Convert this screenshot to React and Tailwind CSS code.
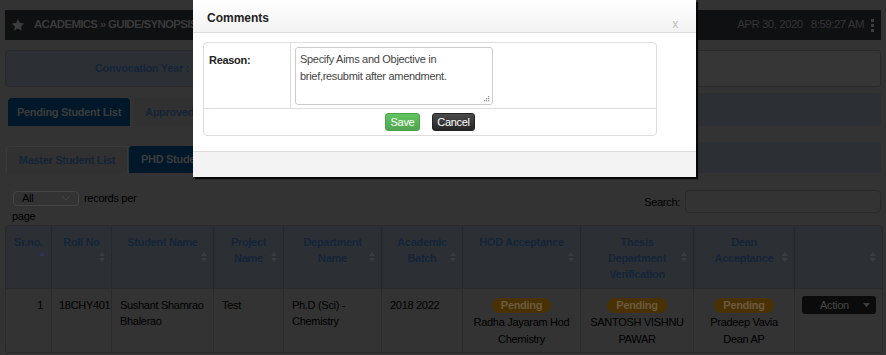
import React from 'react';

const cols = [
  { title: ['Sr.no.'], w: 45, sort: 'asc' },
  { title: ['Roll No'], w: 60 },
  { title: ['Student Name'], w: 102 },
  { title: ['Project', 'Name'], w: 70 },
  { title: ['Department', 'Name'], w: 98 },
  { title: ['Academic', 'Batch'], w: 81 },
  { title: ['HOD Acceptance'], w: 118 },
  { title: ['Thesis', 'Department', 'Verification'], w: 113 },
  { title: ['Dean', 'Acceptance'], w: 101 },
  { title: [], w: 88 },
];

const SortIcon = ({ asc }) => (
  <svg className="absolute right-[6px] top-1/2 -translate-y-1/2" width="6" height="12" viewBox="0 0 6 12">
    {asc ? (
      <path d="M0 5 L3 1 L6 5 Z" fill="#2b3561" />
    ) : (
      <>
        <path d="M0 5 L3 1 L6 5 Z" fill="#3a3e44" />
        <path d="M0 7 L3 11 L6 7 Z" fill="#3a3e44" />
      </>
    )}
  </svg>
);

const Pending = () => (
  <span className="inline-block rounded-full bg-[#4a3104] px-[9px] leading-[15px] font-bold text-[#6a5a40]">Pending</span>
);

const cell = 'border-l border-t border-[#2a2a2a] pt-[8px]';

export default function App() {
  return (
    <div className="relative w-[886px] h-[355px] overflow-hidden bg-[#333333] font-['Liberation_Sans',Arial,sans-serif] text-[11px] tracking-[-0.3px] text-black">
      <div className="px-[5px] pt-[10px]">
        {/* Top bar */}
        <div className="flex h-[30px] items-center bg-[#0f1012] pl-[6px] pr-[7px]">
          <svg width="14" height="14" viewBox="0 0 24 24" className="mr-[9px]">
            <path d="M12 1.5l3.2 7 7.6.8-5.7 5.1 1.6 7.5L12 18l-6.7 3.9 1.6-7.5L1.2 9.3l7.6-.8z" fill="#3d3d3d" />
          </svg>
          <span className="whitespace-nowrap text-[11.5px] font-bold tracking-[-0.7px] text-[#3a3a3a]">
            ACADEMICS » GUIDE/SYNOPSIS
          </span>
          <span className="ml-auto whitespace-nowrap text-[11.5px] tracking-[-0.5px] text-[#353535]">
            APR 30, 2020&nbsp;&nbsp;&nbsp;8:59:27 AM
          </span>
          <div className="ml-[7px] flex flex-col gap-[2px]">
            <span className="h-[3px] w-[3px] bg-[#3d3d3d]" />
            <span className="h-[3px] w-[3px] bg-[#3d3d3d]" />
            <span className="h-[3px] w-[3px] bg-[#3d3d3d]" />
          </div>
        </div>

        {/* Convocation */}
        <div className="mt-[10px] flex h-[37px] overflow-hidden rounded-[3px] border border-[#2a2a2a]">
          <div className="flex w-[190px] items-center justify-end bg-[#2c3035] pr-[7px] font-bold text-[#142438]">
            Convocation Year :
          </div>
          <div className="flex-1 bg-[#363636]" />
        </div>

        {/* Tabs 1 */}
        <div className="mt-[6px] flex h-[33px] items-end">
          <div className="ml-[3px] flex h-[28px] w-[122px] items-center justify-center rounded-t-[4px] bg-[#01182a] font-bold text-[#3c3c3c]">
            Pending Student List
          </div>
          <div className="ml-[3px] flex h-[28px] items-center whitespace-nowrap rounded-t-[4px] bg-[#313131] px-[12px] font-bold text-[#142438]">
            Approved Student List
          </div>
          <div className="h-[33px] flex-1 rounded-r-[3px] bg-[#2c3035]" />
        </div>

        {/* Tabs 2 */}
        <div className="mt-[16px] flex h-[31px] items-end">
          <div className="ml-[1px] flex h-[27px] w-[122px] items-center justify-center rounded-tl-[4px] border border-b-0 border-[#3a3a3a] bg-[#313131] font-bold text-[#142438]">
            Master Student List
          </div>
          <div className="ml-[1px] flex h-[27px] items-center whitespace-nowrap rounded-t-[4px] bg-[#01182a] px-[12px] font-bold text-[#3c3c3c]">
            PHD Student List
          </div>
          <div className="h-[31px] flex-1 rounded-r-[3px] bg-[#2c3035]" />
        </div>

        {/* Records / search */}
        <div className="mt-[17px] flex h-[35px] items-start">
          <div className="pl-[8px]">
            <div className="flex items-center">
              <div className="flex h-[15px] w-[66px] items-center justify-between rounded-[4px] border border-[#444] px-[8px]">
                <span>All</span>
                <svg width="8" height="5" viewBox="0 0 8 5">
                  <path d="M0.5 0.5 L4 4 L7.5 0.5" fill="none" stroke="#444" strokeWidth="1" />
                </svg>
              </div>
              <span className="ml-[5px]">records per</span>
            </div>
            <div className="-ml-[1px] mt-[1px]">page</div>
          </div>
          <div className="ml-auto flex items-center">
            <span className="mr-[5px] mt-[1px]">Search:</span>
            <div className="h-[23px] w-[196px] rounded-[4px] border border-[#2a2a2a] bg-[#333]" />
          </div>
        </div>

        {/* Table */}
        <table className="w-[876px] table-fixed border-separate border-spacing-0 overflow-hidden rounded-[3px] border border-[#2a2a2a]">
          <colgroup>
            {cols.map((c, i) => (
              <col key={i} style={{ width: c.w }} />
            ))}
          </colgroup>
          <thead>
            <tr className="h-[62px] bg-[#2c3035]">
              {cols.map((c, i) => (
                <th
                  key={i}
                  className={`relative pt-[8px] align-top text-center font-bold leading-[16px] text-[#142438] ${i ? 'border-l border-[#262a2e] px-[8px]' : 'px-[4px]'}`}
                >
                  {c.title.map((t, j) => (
                    <div key={j} className="whitespace-nowrap">{t}</div>
                  ))}
                  <SortIcon asc={c.sort === 'asc'} />
                </th>
              ))}
            </tr>
          </thead>
          <tbody>
            <tr className="h-[64px] bg-[#333333] align-top leading-[16px]">
              <td className="border-t border-[#2a2a2a] pr-[8px] pt-[8px] text-right">1</td>
              <td className={`${cell} pl-[7px]`}>18CHY401</td>
              <td className={`${cell} pl-[8px]`}>
                <div>Sushant Shamrao</div>
                <div>Bhalerao</div>
              </td>
              <td className={`${cell} pl-[8px]`}>Test</td>
              <td className={`${cell} pl-[8px]`}>
                <div>Ph.D (Sci) -</div>
                <div>Chemistry</div>
              </td>
              <td className={`${cell} pl-[8px]`}>2018 2022</td>
              <td className={`${cell} text-center leading-[17px]`}>
                <Pending />
                <div>Radha Jayaram Hod</div>
                <div>Chemistry</div>
              </td>
              <td className={`${cell} text-center leading-[17px]`}>
                <Pending />
                <div>SANTOSH VISHNU</div>
                <div>PAWAR</div>
              </td>
              <td className={`${cell} text-center leading-[17px]`}>
                <Pending />
                <div>Pradeep Vavia</div>
                <div>Dean AP</div>
              </td>
              <td className="border-l border-t border-[#2a2a2a] pl-[7px] pt-[7px]">
                <div className="flex h-[18px] w-[74px] items-center rounded-[3px] bg-[#0b0b0b] pl-[18px] pr-[6px] text-[#484848]">
                  <span>Action</span>
                  <svg className="ml-auto" width="7" height="4" viewBox="0 0 7 4">
                    <path d="M0 0 L7 0 L3.5 4 Z" fill="#404040" />
                  </svg>
                </div>
              </td>
            </tr>
          </tbody>
        </table>
      </div>

      {/* Modal */}
      <div className="absolute left-[193px] top-0 w-[503px] bg-white shadow-[2px_2px_1px_rgba(0,0,0,0.85)]">
        <div className="relative h-[33px] border-b border-[#dcdcdc] bg-gradient-to-b from-white to-[#f3f3f3] pl-[14px] pt-[9px]">
          <span className="text-[12px] font-bold tracking-normal text-[#222]">Comments</span>
          <span className="absolute right-[18px] top-[18px] text-[12px] leading-[12px] text-[#bbb]">x</span>
        </div>
        <div className="pb-[15px] pl-[10px] pr-[39px] pt-[9px]">
          <div className="rounded-[4px] border border-[#dddddd]">
            <div className="flex h-[66px] border-b border-[#dddddd]">
              <div className="w-[87px] border-r border-[#dddddd] pl-[5px] pt-[9px] font-bold text-[#222]">Reason:</div>
              <div className="pl-[4px] pt-[4px]">
                <div className="relative h-[58px] w-[198px] rounded-[3px] border border-[#cccccc] pl-[4px] pt-[3px] leading-[17px] text-[#444]">
                  Specify Aims and Objective in
                  <br />
                  brief,resubmit after amendment.
                  <svg className="absolute bottom-[2px] right-[2px]" width="7" height="7" viewBox="0 0 7 7">
                    <rect x="5" y="1" width="1.3" height="1.3" fill="#999" />
                    <rect x="3" y="3" width="1.3" height="1.3" fill="#999" />
                    <rect x="5" y="3" width="1.3" height="1.3" fill="#999" />
                    <rect x="1" y="5" width="1.3" height="1.3" fill="#999" />
                    <rect x="3" y="5" width="1.3" height="1.3" fill="#999" />
                    <rect x="5" y="5" width="1.3" height="1.3" fill="#999" />
                  </svg>
                </div>
              </div>
            </div>
            <div className="flex h-[26px] items-center justify-center gap-[12px]">
              <button className="h-[18px] w-[35px] rounded-[3px] border border-[#4aa14a] bg-gradient-to-b from-[#62c462] to-[#4fa64f] text-[11px] text-white">
                Save
              </button>
              <button className="h-[18px] w-[43px] rounded-[3px] border border-[#222] bg-gradient-to-b from-[#4a4a4a] to-[#262626] text-[11px] text-white">
                Cancel
              </button>
            </div>
          </div>
        </div>
        <div className="h-[26px] border-t border-[#dcdcdc] bg-[#f3f3f3]" />
      </div>
    </div>
  );
}
